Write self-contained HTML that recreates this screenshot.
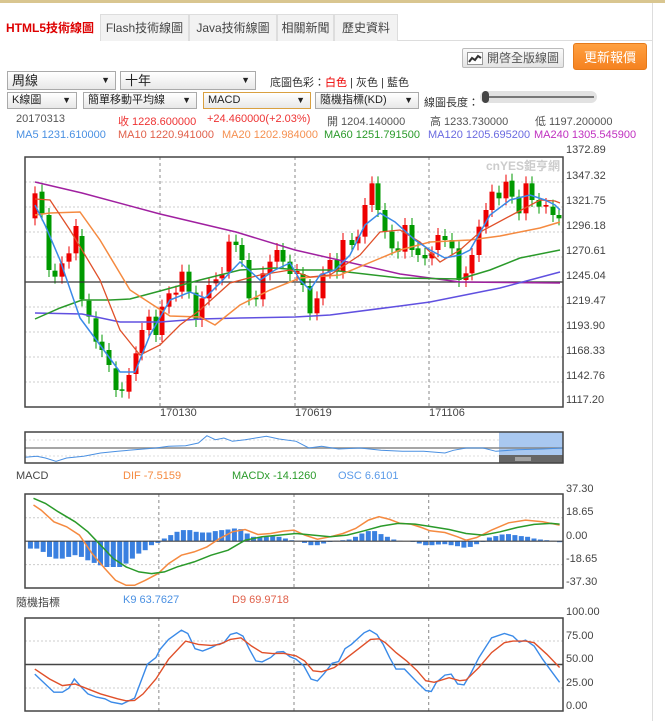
<!DOCTYPE html>
<html><head><meta charset="utf-8">
<style>
*{margin:0;padding:0;box-sizing:border-box}
body{width:665px;height:721px;background:#fff;font-family:"Liberation Sans","Noto Sans CJK TC",sans-serif;position:relative;overflow:hidden;font-size:12px;color:#333}
.a{position:absolute;white-space:nowrap}
.tab{position:absolute;top:14px;height:27px;border:1px solid #ddd;border-bottom:none;background:#f2f2f2;font-size:12px;color:#444;text-align:center;line-height:26px}
.sel{position:absolute;height:19px;border:1px solid #aaa;background:linear-gradient(#fff,#e8e8e8);font-size:13px;line-height:17px;padding-left:4px;color:#222}
.sel.s{height:17px;font-size:11px;line-height:15px}
.sel:after{content:"▼";position:absolute;right:5px;font-size:9px;top:0}
.ax{position:absolute;left:566px;font-size:11px;color:#444}
.lb{position:absolute;font-size:11px}
</style></head><body>
<div class="a" style="left:0;top:0;width:665px;height:3px;background:#d9c690"></div>
<div class="a" style="left:652px;top:3px;width:1px;height:718px;background:#ddd"></div>
<div class="a" style="left:398px;top:40px;width:255px;height:1px;background:#ddd"></div>
<div class="tab" style="left:0;width:100px;background:#fff;border-color:#fff;color:#d00;font-weight:bold">HTML5技術線圖</div>
<div class="tab" style="left:100px;width:89px">Flash技術線圖</div>
<div class="tab" style="left:189px;width:88px">Java技術線圖</div>
<div class="tab" style="left:277px;width:57px">相關新聞</div>
<div class="tab" style="left:334px;width:64px">歷史資料</div>
<div class="a" style="left:462px;top:48px;width:102px;height:20px;border:1px solid #bbb;border-radius:2px;background:linear-gradient(#fafafa,#e4e4e4);font-size:12px;color:#555;line-height:18px;padding-left:24px">開啓全版線圖
<svg style="position:absolute;left:4px;top:3px" width="16" height="13"><rect x="0.5" y="0.5" width="15" height="12" fill="#fff" stroke="#999"/><polyline points="2,10 5,6 8,8 11,4 14,6" fill="none" stroke="#333" stroke-width="2"/></svg></div>
<div class="a" style="left:573px;top:43px;width:74px;height:27px;border-radius:3px;background:linear-gradient(#ffa040,#f58220);color:#fff;font-size:13px;text-align:center;line-height:27px;border:1px solid #e57a1a">更新報價</div>
<div class="sel" style="left:7px;top:71px;width:109px">周線</div>
<div class="sel" style="left:120px;top:71px;width:136px">十年</div>
<div class="a" style="left:270px;top:74px;font-size:11px;color:#333">底圖色彩：<span style="color:#e00">白色</span> | 灰色 | 藍色</div>
<div class="sel s" style="left:7px;top:92px;width:70px">K線圖</div>
<div class="sel s" style="left:83px;top:92px;width:114px">簡單移動平均線</div>
<div class="sel s" style="left:203px;top:92px;width:108px;border-color:#d9a040">MACD</div>
<div class="sel s" style="left:315px;top:92px;width:104px">隨機指標(KD)</div>
<div class="a" style="left:424px;top:94px;font-size:11px">線圖長度：</div>
<div class="a" style="left:480px;top:91px;width:117px;height:12px;border-radius:6px;background:#e2e2e2"></div>
<div class="a" style="left:484px;top:96px;width:110px;height:2px;background:#777"></div>
<div class="a" style="left:482px;top:91px;width:7px;height:12px;border-radius:4px;background:#444"></div>
<div class="lb" style="left:16px;top:113px;color:#555">20170313</div>
<div class="lb" style="left:118px;top:113px;color:#e33">收 1228.600000</div>
<div class="lb" style="left:207px;top:113px;color:#e33">+24.460000(+2.03%)</div>
<div class="lb" style="left:327px;top:113px;color:#555">開 1204.140000</div>
<div class="lb" style="left:430px;top:113px;color:#555">高 1233.730000</div>
<div class="lb" style="left:535px;top:113px;color:#555">低 1197.200000</div>
<div class="lb" style="left:16px;top:129px;color:#4a90e2">MA5 1231.610000</div>
<div class="lb" style="left:118px;top:129px;color:#e0604a">MA10 1220.941000</div>
<div class="lb" style="left:222px;top:129px;color:#f59050">MA20 1202.984000</div>
<div class="lb" style="left:324px;top:129px;color:#2a9a2a">MA60 1251.791500</div>
<div class="lb" style="left:428px;top:129px;color:#6a6ae0">MA120 1205.695200</div>
<div class="lb" style="left:534px;top:129px;color:#c030c0">MA240 1305.545900</div>

<div class="ax" style="top:144px">1372.89</div><div class="ax" style="top:170px">1347.32</div><div class="ax" style="top:195px">1321.75</div><div class="ax" style="top:220px">1296.18</div><div class="ax" style="top:245px">1270.61</div><div class="ax" style="top:270px">1245.04</div><div class="ax" style="top:295px">1219.47</div><div class="ax" style="top:320px">1193.90</div><div class="ax" style="top:345px">1168.33</div><div class="ax" style="top:370px">1142.76</div><div class="ax" style="top:394px">1117.20</div>
<div class="lb" style="left:160px;top:407px;color:#444">170130</div>
<div class="lb" style="left:295px;top:407px;color:#444">170619</div>
<div class="lb" style="left:429px;top:407px;color:#444">171106</div>

<svg id="main" class="a" style="left:0;top:0" width="665" height="721"></svg>

<div class="lb" style="left:16px;top:470px;color:#444">MACD</div>
<div class="lb" style="left:123px;top:470px;color:#f58a40">DIF -7.5159</div>
<div class="lb" style="left:232px;top:470px;color:#2a9a2a">MACDx -14.1260</div>
<div class="lb" style="left:338px;top:470px;color:#5a9ae8">OSC 6.6101</div>
<div class="ax" style="top:483px">37.30</div><div class="ax" style="top:506px">18.65</div><div class="ax" style="top:530px">0.00</div><div class="ax" style="top:553px">-18.65</div><div class="ax" style="top:576px">-37.30</div>
<div class="lb" style="left:16px;top:594px;color:#444">隨機指標</div>
<div class="lb" style="left:123px;top:594px;color:#4a90e2">K9 63.7627</div>
<div class="lb" style="left:232px;top:594px;color:#e0604a">D9 69.9718</div>
<div class="ax" style="top:606px">100.00</div><div class="ax" style="top:630px">75.00</div><div class="ax" style="top:653px">50.00</div><div class="ax" style="top:677px">25.00</div><div class="ax" style="top:700px">0.00</div>
<div class="a" style="left:486px;top:157px;font-size:12px;font-weight:bold;color:#ccc">cnYES鉅亨網</div>

<script>
var S=document.getElementById('main'),h='';
function ln(x1,y1,x2,y2,c,w,d){h+='<line x1="'+x1+'" y1="'+y1+'" x2="'+x2+'" y2="'+y2+'" stroke="'+c+'" stroke-width="'+(w||1)+'"'+(d?' stroke-dasharray="'+d+'"':'')+'/>';}
function pl(p,c,w){h+='<polyline fill="none" stroke="'+c+'" stroke-width="'+(w||1.3)+'" points="'+p.map(function(q){return q[0]+','+q[1]}).join(' ')+'"/>';}
// mapping zoom2/5 coords to box
function mp(pts,y0,y1,oy0,oy1){return pts.map(function(q){return [(25+(q[0]-62)/1266*538).toFixed(1),(oy0+(q[1]-y0)/(y1-y0)*(oy1-oy0)).toFixed(1)]});}
// main grid
for(var g=182;g<=382;g+=25){if(g!=282)ln(25,g,563,g,'#ccc',1,'2,2');}
[160,295,429].forEach(function(x){ln(x,157,x,407,'#888',1,'3,3');});
// candles
var C=[[35,130,205,'r'],[42,125,190,'g'],[49,195,360,'g'],[55,362,380,'g'],[62,340,380,'r'],[69,310,335,'r'],[76,228,310,'r'],[82,258,448,'g'],[89,452,500,'g'],[96,505,575,'g'],[102,575,600,'g'],[109,600,645,'g'],[116,655,720,'g'],[122,718,722,'g'],[129,675,725,'r'],[136,610,672,'r'],[142,540,610,'r'],[149,500,540,'r'],[156,500,555,'g'],[162,470,555,'r'],[169,430,470,'r'],[176,428,434,'r'],[182,365,425,'r'],[189,365,425,'g'],[196,428,510,'g'],[202,445,510,'r'],[209,405,445,'r'],[216,388,400,'r'],[222,372,385,'r'],[229,275,365,'r'],[236,275,285,'g'],[242,285,330,'g'],[249,330,445,'g'],[256,443,448,'g'],[263,370,448,'r'],[270,335,370,'r'],[277,300,335,'r'],[283,300,335,'g'],[290,335,372,'g'],[297,363,372,'r'],[303,372,405,'g'],[310,408,490,'g'],[317,445,490,'r'],[323,370,445,'r'],[330,330,365,'r'],[337,330,365,'g'],[343,270,365,'r']];
var D=[[352,270,285,'g'],[358,260,280,'r'],[365,165,260,'r'],[372,100,165,'r'],[378,100,180,'g'],[385,180,245,'g'],[392,245,295,'g'],[398,295,305,'g'],[405,225,305,'r'],[412,225,300,'g'],[418,295,315,'g'],[425,315,325,'g'],[432,310,325,'r'],[438,255,300,'r'],[445,258,270,'g'],[452,270,295,'g'],[459,295,390,'g'],[466,370,390,'r'],[472,315,370,'r'],[479,230,315,'r'],[486,180,230,'r'],[492,125,180,'r'],[499,128,145,'g'],[506,95,145,'r'],[512,92,140,'g'],[519,140,190,'g'],[526,100,190,'r'],[532,100,150,'g'],[539,150,170,'g'],[546,165,170,'r'],[553,170,195,'g'],[559,195,205,'g']];
function cd(x,t,b,c){var col=c=='r'?'#e00':'#090';ln(x,t-7,x,b+7,col,1);h+='<rect x="'+(x-2.5)+'" y="'+t+'" width="5" height="'+Math.max(1.5,b-t)+'" fill="'+col+'"/>';}
C.forEach(function(c){cd(c[0],150+c[1]/3,150+c[2]/3,c[3]);});
D.forEach(function(c){cd(c[0],150+c[1]/3,150+c[2]/3,c[3]);});
ln(25,282,563,282,'#333',1.2);
pl([[35,182],[82,193],[160,214],[236,232],[295,250],[330,258],[400,274],[460,282],[560,283]],'#a020a0',1.5);
pl([[35,313],[82,314],[120,322],[160,322],[200,319],[240,318],[295,317],[330,315],[400,306],[430,302],[470,294],[500,288],[530,280],[560,272]],'#6050e0',1.5);
pl([[35,319],[60,308],[82,300],[110,300],[130,299],[160,291],[200,280],[240,270],[275,268],[300,270],[330,270],[400,278],[460,279],[490,270],[520,258],[560,250]],'#2a9a2a',1.5);
pl([[35,215],[50,213],[80,212],[100,240],[130,290],[170,316],[200,317],[215,325],[240,305],[270,290],[300,278],[340,275],[400,250],[430,242],[470,240],[500,236],[540,228],[560,222]],'#f58a40',1.5);
pl([[35,199],[50,200],[70,230],[100,280],[120,330],[140,355],[160,345],[180,325],[200,310],[230,283],[260,275],[290,270],[310,277],[330,275],[360,255],[380,232],[400,230],[420,242],[440,262],[460,250],[480,232],[510,216],[540,200],[555,201],[560,203]],'#e0502a',1.3);
pl([[35,205],[45,225],[60,260],[80,318],[100,345],[120,372],[135,372],[150,335],[170,300],[190,292],[205,298],[220,283],[240,262],[260,280],[275,270],[290,263],[300,280],[310,290],[320,275],[335,270],[350,255],[365,225],[380,213],[395,222],[415,240],[430,250],[445,258],[460,255],[470,250],[490,215],[510,200],[530,195],[545,200],[555,205],[560,210]],'#3a8ae8',1.5);
h+='<rect x="25" y="157" width="538" height="250" fill="none" stroke="#444" stroke-width="1.5"/>';
// navigator
ln(25,440,563,440,'#ddd',1,'2,2');ln(25,456,563,456,'#ddd',1,'2,2');
h+='<rect x="499" y="432" width="64" height="31" fill="#a9c8f0"/><rect x="499" y="455" width="64" height="8" fill="#666"/>';
ln(515,458,531,458,'#ddd');ln(515,460,531,460,'#ddd');
ln(25,448,563,448,'#888',1.5);
var nv=[[62,113],[90,110],[110,115],[135,125],[160,115],[200,110],[240,100],[280,95],[320,90],[370,85],[400,80],[440,78],[470,70],[490,48],[510,60],[530,55],[550,65],[580,60],[630,50],[660,58],[700,65],[730,85],[760,80],[800,88],[850,85],[900,92],[950,95],[1000,95],[1050,100],[1070,92],[1100,85],[1140,85],[1170,95],[1220,90],[1280,88],[1328,85]];
pl(mp(nv,37,130,432,463),'#4a90e2',1);
h+='<rect x="25" y="432" width="538" height="31" fill="none" stroke="#444" stroke-width="1.5"/>';
// MACD
function my(z){return 494+(z-222)/(503-222)*94;}
ln(25,my(293),563,my(293),'#ccc',1,'2,2');ln(25,my(433),563,my(433),'#ccc',1,'2,2');
[377,695,1012].forEach(function(z){var x=25+(z-62)/1266*538;ln(x,494,x,588,'#888',1,'3,3');ln(x,618,x,711,'#888',1,'3,3');});
var hb=[385,385,395,410,415,415,410,405,410,420,428,435,440,440,440,430,415,400,390,375,368,355,345,335,330,330,335,337,337,333,330,328,325,327,340,350,352,350,348,350,355,360,362,368,375,375,370,365,362,360,358,350,340,333,333,342,350,358,362,363,365,370,375,375,373,372,375,378,382,380,372,365,352,348,343,342,345,348,350,355,358,360,362,366];
var z0=my(363);
hb.forEach(function(v,i){var x=25+(75+i*15-62)/1266*538,y=my(v);h+='<rect x="'+(x-2.6).toFixed(1)+'" y="'+Math.min(y,z0).toFixed(1)+'" width="5" height="'+Math.abs(y-z0).toFixed(1)+'" fill="#3a80e0"/>';});
ln(25,z0,563,z0,'#444',1.2);
pl(mp([[82,255],[100,270],[130,305],[160,320],[190,345],[220,400],[250,445],[275,480],[300,495],[320,495],[345,480],[375,460],[400,430],[430,405],[460,395],[490,380],[520,355],[550,335],[580,328],[610,343],[640,340],[670,333],[695,330],[720,345],[750,357],[780,350],[810,340],[840,325],[870,300],[895,290],[920,298],[945,310],[970,312],[995,322],[1015,332],[1050,337],[1080,350],[1100,360],[1125,352],[1160,330],[1200,308],[1240,300],[1280,305],[1320,315]],222,503,494,588),'#f58a40',1.5);
pl(mp([[82,235],[110,250],[140,275],[180,305],[210,335],[240,375],[270,415],[300,440],[330,455],[360,460],[390,455],[420,440],[460,425],[500,405],[540,390],[580,360],[620,350],[660,345],[700,340],[740,345],[780,350],[820,345],[860,332],[900,318],[940,310],[980,312],[1020,320],[1060,328],[1100,340],[1140,345],[1180,335],[1220,322],[1260,313],[1300,310],[1320,312]],222,503,494,588),'#2a9a2a',1.5);
h+='<rect x="25" y="494" width="538" height="94" fill="none" stroke="#444" stroke-width="1.5"/>';
// KD
ln(25,641,563,641,'#ccc',1,'2,2');ln(25,688,563,688,'#ccc',1,'2,2');ln(25,664.5,563,664.5,'#444',1.5);
pl(mp([[85,225],[130,280],[150,280],[165,268],[178,240],[195,265],[210,285],[230,295],[250,300],[265,310],[290,316],[320,298],[350,195],[370,175],[380,150],[400,120],[430,92],[445,102],[462,148],[480,155],[500,145],[515,135],[530,130],[545,105],[560,100],[575,110],[590,150],[605,185],[620,188],[640,175],[655,158],[670,157],[685,172],[700,180],[718,200],[735,240],[750,246],[765,225],[785,192],[800,187],[815,148],[830,135],[860,100],[873,92],[890,105],[905,135],[920,175],[935,210],[955,210],[985,250],[1005,275],[1018,278],[1030,250],[1050,228],[1065,225],[1080,255],[1095,258],[1110,225],[1130,175],[1160,115],[1190,102],[1210,110],[1225,128],[1240,122],[1260,140],[1280,180],[1300,215],[1320,250]],55,337,618,711),'#3a8ae8',1.4);
pl(mp([[85,210],[120,240],[150,260],[180,255],[200,265],[240,285],[280,300],[300,306],[320,305],[340,285],[370,240],[400,180],[440,125],[470,135],[500,138],[520,135],[545,120],[570,115],[595,140],[620,160],[645,163],[670,162],[700,170],[720,185],[740,215],[760,218],[790,205],[820,175],[850,145],[875,120],[895,118],[910,130],[935,160],[960,185],[985,215],[1005,245],[1025,250],[1060,236],[1085,245],[1100,243],[1130,205],[1160,160],[1190,130],[1210,125],[1240,125],[1260,130],[1290,165],[1320,205]],55,337,618,711),'#e0502a',1.4);
h+='<rect x="25" y="618" width="538" height="93" fill="none" stroke="#444" stroke-width="1.5"/>';
S.innerHTML=h;
</script>
</body></html>
